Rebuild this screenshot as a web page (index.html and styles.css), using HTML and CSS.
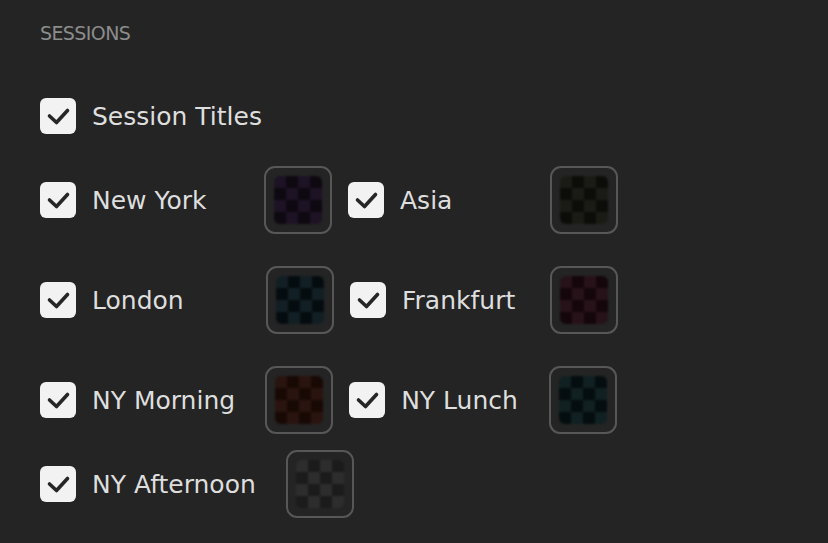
FILE: index.html
```html
<!DOCTYPE html>
<html lang="en">
<head>
    <meta charset="UTF-8">
    <meta name="viewport" content="width=device-width, initial-scale=1.0">
    <title>Sessions</title>
    <link rel="stylesheet" href="styles.css">
</head>
<body>
    <div class="panel">
        <h2 class="title">SESSIONS</h2>

        <label class="master">
            <span class="check"><svg viewBox="0 0 36 36"><polyline points="9.5,18 16.5,24.5 27.5,12.5"/></svg></span>
            <span class="text">Session Titles</span>
        </label>

        <div class="row">
            <div class="item col-a">
                <span class="check"><svg viewBox="0 0 36 36"><polyline points="9.5,18 16.5,24.5 27.5,12.5"/></svg></span>
                <span class="text">New York</span>
                <span class="swatch"><span class="fill sw-ny"></span></span>
            </div>
            <div class="item col-b">
                <span class="check"><svg viewBox="0 0 36 36"><polyline points="9.5,18 16.5,24.5 27.5,12.5"/></svg></span>
                <span class="text">Asia</span>
                <span class="swatch shift"><span class="fill sw-asia"></span></span>
            </div>
        </div>

        <div class="row">
            <div class="item col-a">
                <span class="check"><svg viewBox="0 0 36 36"><polyline points="9.5,18 16.5,24.5 27.5,12.5"/></svg></span>
                <span class="text">London</span>
                <span class="swatch shift"><span class="fill sw-london"></span></span>
            </div>
            <div class="item col-b">
                <span class="check"><svg viewBox="0 0 36 36"><polyline points="9.5,18 16.5,24.5 27.5,12.5"/></svg></span>
                <span class="text">Frankfurt</span>
                <span class="swatch"><span class="fill sw-frankfurt"></span></span>
            </div>
        </div>

        <div class="row">
            <div class="item col-a">
                <span class="check"><svg viewBox="0 0 36 36"><polyline points="9.5,18 16.5,24.5 27.5,12.5"/></svg></span>
                <span class="text">NY Morning</span>
                <span class="swatch"><span class="fill sw-morning"></span></span>
            </div>
            <div class="item col-b">
                <span class="check"><svg viewBox="0 0 36 36"><polyline points="9.5,18 16.5,24.5 27.5,12.5"/></svg></span>
                <span class="text">NY Lunch</span>
                <span class="swatch"><span class="fill sw-lunch"></span></span>
            </div>
        </div>

        <div class="row tight">
            <div class="item col-a">
                <span class="check"><svg viewBox="0 0 36 36"><polyline points="9.5,18 16.5,24.5 27.5,12.5"/></svg></span>
                <span class="text">NY Afternoon</span>
                <span class="swatch"><span class="fill sw-afternoon"></span></span>
            </div>
        </div>
    </div>
</body>
</html>
```

FILE: styles.css
```css
html, body { margin: 0; background: #242424; }
body { font-family: "DejaVu Sans", Verdana, sans-serif; color: #dedede; }
.panel { padding: 22px 40px 20px; }
.title { margin: 0; font-size: 19px; line-height: 22px; letter-spacing: -0.6px; font-weight: normal; color: #8c8c8c; }

.master { display: flex; align-items: center; gap: 16px; height: 36px; margin-top: 54px; }
.row { display: flex; gap: 16px; margin-top: 32px; }
.row.tight { margin-top: 16px; }
.item { display: flex; align-items: center; height: 68px; }

.check { width: 36px; height: 36px; border-radius: 6px; background: #f2f2f2; flex: none; display: block; }
.check svg { display: block; width: 36px; height: 36px; }
.check polyline { fill: none; stroke: #262626; stroke-width: 3.6; stroke-linecap: round; stroke-linejoin: round; }

.text { font-size: 25px; line-height: 32px; padding-top: 2px; white-space: nowrap; }
.item .text { margin-left: 16px; margin-right: 30px; }
.col-a .text { min-width: 142px; }
.col-b .text { min-width: 118px; }
.swatch.shift { margin-left: 2px; }

.swatch { box-sizing: border-box; width: 68px; height: 68px; border: 2px solid #575757; border-radius: 11px; padding: 8px; display: block; flex: none; }
.fill { display: block; width: 48px; height: 48px; border-radius: 6px; background: conic-gradient(var(--dark) 25%, var(--light) 0 50%, var(--dark) 0 75%, var(--light) 0); background-size: 24px 24px; filter: blur(1.2px); }

.sw-ny { --light: #1d1325; --dark: #0e0811; }
.sw-asia { --light: #1b1b16; --dark: #0c0c09; }
.sw-london { --light: #121f24; --dark: #050c0f; }
.sw-frankfurt { --light: #27121a; --dark: #14060a; }
.sw-morning { --light: #29140f; --dark: #180905; }
.sw-lunch { --light: #112022; --dark: #040d0f; }
.sw-afternoon { --light: #2d2d2d; --dark: #1b1b1b; }
```
